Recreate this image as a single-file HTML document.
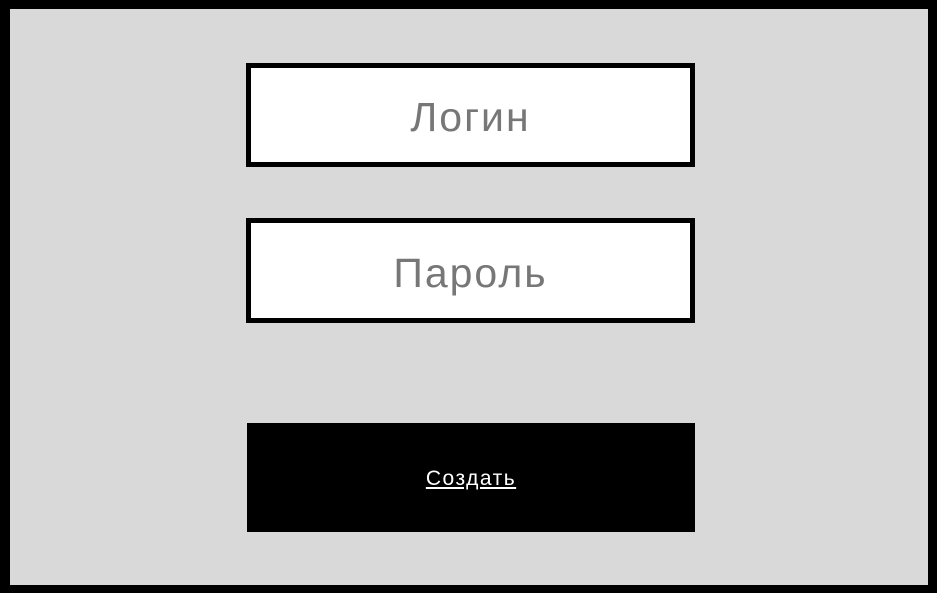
<!DOCTYPE html>
<html><head><style>
html,body{margin:0;padding:0;width:937px;height:593px;overflow:hidden;background:#000}
.frame{position:absolute;left:10px;top:9px;width:918px;height:576px;background:#d9d9d9}
.box{position:absolute;left:246px;width:449px;background:#fff;border:5px solid #000;display:flex;align-items:center;justify-content:center;font-family:"Liberation Sans",sans-serif;font-size:41px;color:#777;letter-spacing:2px;padding-top:5px;box-sizing:border-box}
.btn{position:absolute;left:247px;top:423px;width:448px;height:109px;background:#000;display:flex;align-items:center;justify-content:center;font-family:"Liberation Sans",sans-serif;font-size:21px;color:#fff;text-decoration:underline;letter-spacing:1.5px;padding-top:2px;box-sizing:border-box}
</style></head><body>
<div class="frame"></div>
<div class="box" style="top:63px;height:104px">Логин</div>
<div class="box" style="top:218px;height:105px">Пароль</div>
<div class="btn">Создать</div>
</body></html>
